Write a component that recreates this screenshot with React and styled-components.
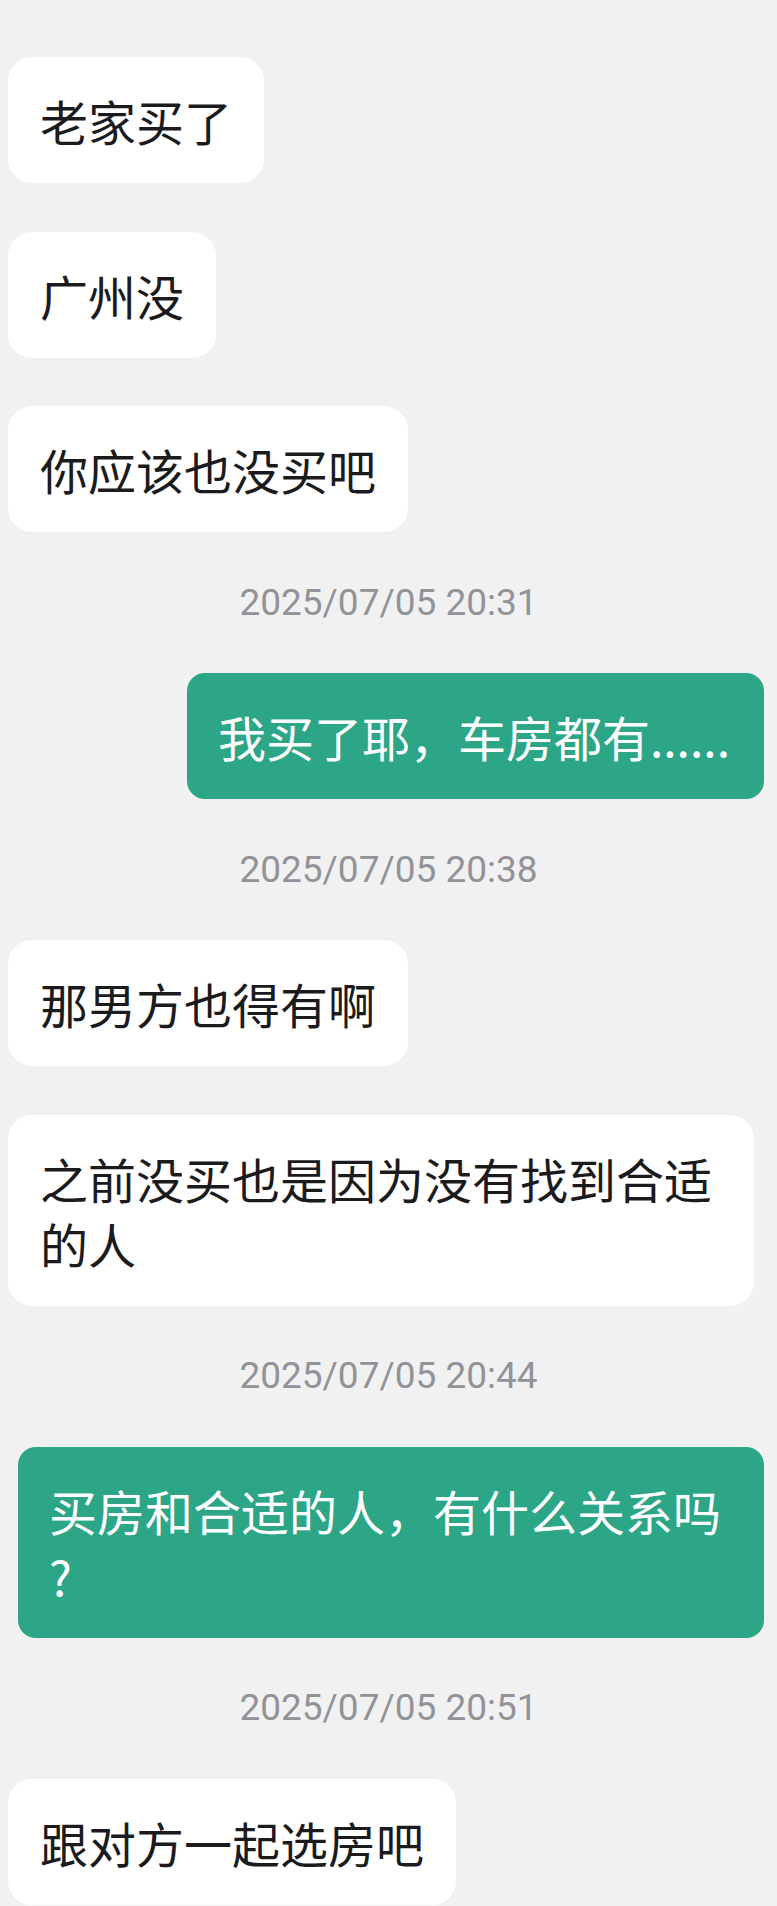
import React from 'react';
import styled, { createGlobalStyle } from 'styled-components';

const GlobalStyle = createGlobalStyle`
  html, body {
    margin: 0;
    padding: 0;
    background: #f1f1f1;
  }
  body {
    font-family: "Noto Sans CJK SC", "Noto Sans", sans-serif;
    -webkit-font-smoothing: antialiased;
  }
`;

const Thread = styled.div`
  display: flex;
  flex-direction: column;
  gap: 48.5px;
  padding: 57px 0 40px;
  background: #f1f1f1;
  min-height: 1906px;
  box-sizing: border-box;
`;

const Row = styled.div`
  display: flex;
  justify-content: ${p => (p.mine ? 'flex-end' : 'flex-start')};
  padding: ${p => (p.mine ? '0 13px 0 17px' : '0 23px 0 8px')};
`;

const Bubble = styled.div`
  max-width: 746px;
  box-sizing: border-box;
  padding: ${p => (p.mine ? '31px 34px 30px 31px' : '31px 32px 30px 32px')};
  border-radius: ${p => (p.mine ? '18px' : '24px')};
  background: ${p => (p.mine ? '#2ca687' : '#ffffff')};
  color: ${p => (p.mine ? '#ffffff' : '#1b1b1d')};
  font-family: "Noto Sans CJK SC", "Noto Sans", sans-serif;
  font-size: 48px;
  line-height: 65px;
  line-break: anywhere;
`;

const Stamp = styled.div`
  text-align: center;
  font-family: Roboto, "Liberation Sans", sans-serif;
  font-size: 37px;
  line-height: 44px;
  color: #929398;
`;

const messages = [
  { text: '老家买了' },
  { text: '广州没' },
  { text: '你应该也没买吧' },
  { stamp: '2025/07/05 20:31' },
  { text: '我买了耶，车房都有......', mine: true },
  { stamp: '2025/07/05 20:38' },
  { text: '那男方也得有啊' },
  { text: '之前没买也是因为没有找到合适的人' },
  { stamp: '2025/07/05 20:44' },
  { text: '买房和合适的人，有什么关系吗?', mine: true },
  { stamp: '2025/07/05 20:51' },
  { text: '跟对方一起选房吧' },
];

export default function App() {
  return (
    <>
      <GlobalStyle />
      <Thread>
        {messages.map((m, i) =>
          m.stamp ? (
            <Stamp key={i}>{m.stamp}</Stamp>
          ) : (
            <Row key={i} mine={m.mine}>
              <Bubble mine={m.mine}>{m.text}</Bubble>
            </Row>
          )
        )}
      </Thread>
    </>
  );
}
